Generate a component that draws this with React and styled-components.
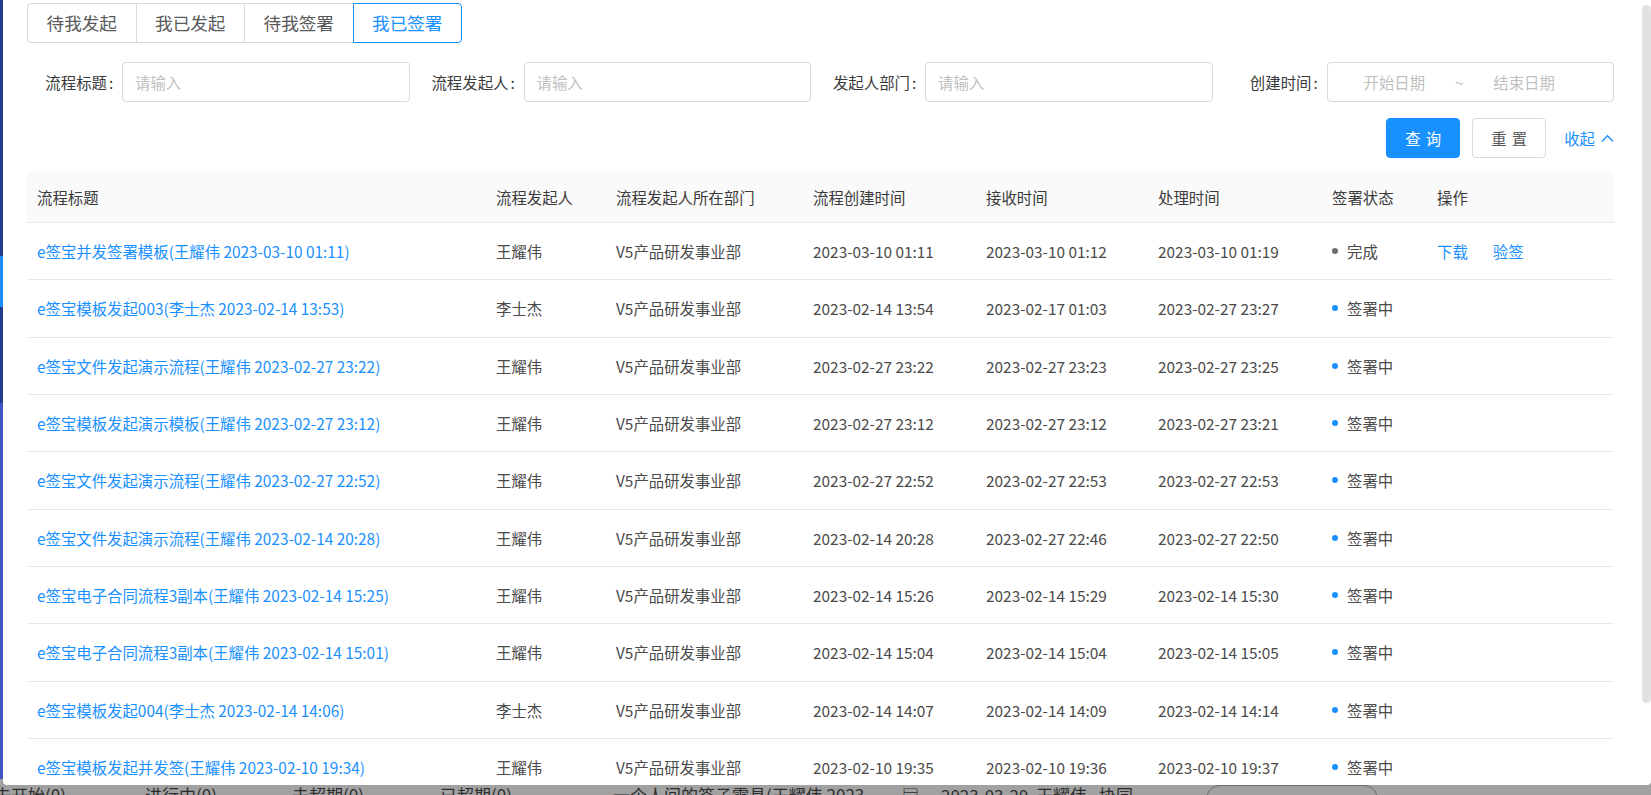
import React from 'react';
import styled, { createGlobalStyle } from 'styled-components';

const GlobalStyle = createGlobalStyle`
  html, body { margin: 0; padding: 0; width: 1651px; height: 795px; overflow: hidden; }
  body { font-family: "Noto Sans CJK SC", "Noto Sans", sans-serif; background: #a2a2a2; }
  *, *::before, *::after { box-sizing: border-box; }
  input { font-family: inherit; }
`;

const Screen = styled.div`
  position: relative;
  width: 1651px;
  height: 795px;
  overflow: hidden;
  display: flex;
  flex-direction: column;
  background: #a2a2a2;
`;

/* ---------- dimmed page behind the modal ---------- */
const Upper = styled.div`
  flex: 1;
  display: flex;
  min-height: 0;
`;

const Sidebar = styled.nav`
  width: 200px;
  flex: none;
  display: flex;
  flex-direction: column;
  background: #4453c3;
`;

const NavBlock = styled.div`
  flex: ${p => (p.$h ? 'none' : '1')};
  height: ${p => (p.$h ? `${p.$h}px` : 'auto')};
  background: ${p => p.$c};
`;

const PageArea = styled.div`
  flex: 1;
  background: #a4a4a4;
`;

const Strip = styled.div`
  height: 16px;
  flex: none;
  display: grid;
  grid-template-columns: 151px 147px 148px 173px 289px 39px 95px 63px 107px 172px 1fr;
  margin-left: -6px;
  padding-top: 6px;
  background: #a1a1a1;
  color: #2e2e2e;
  font-size: 17px;
  line-height: 20px;
  overflow: hidden;
  white-space: nowrap;
`;

const StripCell = styled.span`
  overflow: hidden;
`;

const StripBox = styled.span`
  display: block;
  height: 30px;
  border: 1px solid #6c6c6c;
  border-radius: 14px;
`;

/* ---------- modal ---------- */
const Modal = styled.section`
  position: absolute;
  left: 3px;
  top: 0;
  right: 0;
  height: 785px;
  background: #fff;
  border-radius: 0 0 4px 4px;
  overflow: hidden;
  display: flex;
  flex-direction: column;
  padding: 3px 37px 0 24px;
  font-size: 15.4px;
  color: #4a4a4a;
`;

const ScrollThumb = styled.div`
  position: absolute;
  right: 0;
  top: 5px;
  width: 9px;
  height: 698px;
  background: #e2e2e2;
  border-radius: 5px;
`;

const TabBar = styled.div`
  display: flex;
  flex: none;
`;

const Tab = styled.button`
  width: 109.5px;
  height: 40px;
  margin: 0 0 0 -1px;
  padding: 0;
  background: #fff;
  border: 1px solid ${p => (p.$active ? '#1890ff' : '#d9d9d9')};
  color: ${p => (p.$active ? '#1890ff' : '#595959')};
  font-family: inherit;
  font-size: 17.6px;
  line-height: 38px;
  position: relative;
  z-index: ${p => (p.$active ? 1 : 0)};
  cursor: pointer;
  &:first-child { margin-left: 0; border-radius: 4px 0 0 4px; }
  &:last-child { border-radius: 0 4px 4px 0; }
`;

const FilterGrid = styled.div`
  display: grid;
  grid-template-columns: repeat(4, 401.5px);
  margin: 19px 0 0 -19px;
  flex: none;
`;

const Field = styled.div`
  display: flex;
  align-items: center;
  height: 40px;
  min-width: 0;
`;

const Label = styled.label`
  width: 114px;
  flex: none;
  text-align: right;
  padding-right: 8.8px;
  color: #3a3a3a;
  white-space: nowrap;
  &::after { content: ':'; margin-left: 2px; }
`;

const TextInput = styled.input`
  flex: 1;
  width: 0;
  min-width: 0;
  height: 40px;
  border: 1px solid #d9d9d9;
  border-radius: 4px;
  padding: 0 12px;
  font-size: 15.4px;
  color: #4a4a4a;
  outline: none;
  &::placeholder { color: #bfbfbf; }
`;

const Range = styled.div`
  flex: 1;
  width: 0;
  min-width: 0;
  height: 40px;
  border: 1px solid #d9d9d9;
  border-radius: 4px;
  display: flex;
  align-items: center;
  padding: 0 34px 0 12px;
`;

const RangeInput = styled.input`
  flex: 1;
  width: 0;
  min-width: 0;
  padding: 0;
  border: none;
  outline: none;
  text-align: center;
  font-size: 15.4px;
  background: transparent;
  &::placeholder { color: #bfbfbf; }
`;

const RangeSep = styled.span`
  width: 20px;
  flex: none;
  text-align: center;
  color: #bfbfbf;
`;

const ActionRow = styled.div`
  display: flex;
  justify-content: flex-end;
  align-items: center;
  gap: 12px;
  margin-top: 16px;
  flex: none;
`;

const Button = styled.button`
  width: 74px;
  height: 40px;
  border-radius: 4px;
  border: 1px solid ${p => (p.$primary ? '#1890ff' : '#d9d9d9')};
  background: ${p => (p.$primary ? '#1890ff' : '#fff')};
  color: ${p => (p.$primary ? '#fff' : '#595959')};
  font-family: inherit;
  font-size: 15.4px;
  letter-spacing: 0.34em;
  text-indent: 0.34em;
  padding: 0;
  cursor: pointer;
`;

const CollapseLink = styled.a`
  margin-left: 6px;
  color: #1890ff;
  display: inline-flex;
  align-items: center;
  gap: 6px;
  cursor: pointer;
`;

const Table = styled.div`
  margin-top: 13px;
  flex: none;
`;

const COLS = '459px 120px 197px 173px 172px 174px 105px 1fr';

const HeadRow = styled.div`
  display: grid;
  grid-template-columns: ${COLS};
  height: 52px;
  background: #fafafa;
  border-bottom: 1px solid #e8e8e8;
  border-radius: 4px 4px 0 0;
  color: #3a3a3a;
`;

const Row = styled.div`
  display: grid;
  grid-template-columns: ${COLS};
  height: 57.33px;
  border-bottom: 1px solid #e8e8e8;
`;

const Cell = styled.div`
  display: flex;
  align-items: center;
  padding: 0 10px;
  white-space: nowrap;
  overflow: hidden;
  gap: ${p => p.$gap || 0}px;
`;

const Link = styled.a`
  color: #1890ff;
  cursor: pointer;
`;

const Dot = styled.span`
  width: 6px;
  height: 6px;
  border-radius: 50%;
  background: ${p => (p.$done ? '#6e6e6e' : '#1890ff')};
  margin-right: 9px;
  flex: none;
`;

const ChevronUp = () => (
  <svg width="13" height="9" viewBox="0 0 13 9" fill="none">
    <path d="M1 7.5 L6.5 1.8 L12 7.5" stroke="#1890ff" strokeWidth="1.3" />
  </svg>
);

const DEPT = 'V5产品研发事业部';
const rows = [
  ['e签宝并发签署模板(王耀伟 2023-03-10 01:11)', '王耀伟', '2023-03-10 01:11', '2023-03-10 01:12', '2023-03-10 01:19', true],
  ['e签宝模板发起003(李士杰 2023-02-14 13:53)', '李士杰', '2023-02-14 13:54', '2023-02-17 01:03', '2023-02-27 23:27'],
  ['e签宝文件发起演示流程(王耀伟 2023-02-27 23:22)', '王耀伟', '2023-02-27 23:22', '2023-02-27 23:23', '2023-02-27 23:25'],
  ['e签宝模板发起演示模板(王耀伟 2023-02-27 23:12)', '王耀伟', '2023-02-27 23:12', '2023-02-27 23:12', '2023-02-27 23:21'],
  ['e签宝文件发起演示流程(王耀伟 2023-02-27 22:52)', '王耀伟', '2023-02-27 22:52', '2023-02-27 22:53', '2023-02-27 22:53'],
  ['e签宝文件发起演示流程(王耀伟 2023-02-14 20:28)', '王耀伟', '2023-02-14 20:28', '2023-02-27 22:46', '2023-02-27 22:50'],
  ['e签宝电子合同流程3副本(王耀伟 2023-02-14 15:25)', '王耀伟', '2023-02-14 15:26', '2023-02-14 15:29', '2023-02-14 15:30'],
  ['e签宝电子合同流程3副本(王耀伟 2023-02-14 15:01)', '王耀伟', '2023-02-14 15:04', '2023-02-14 15:04', '2023-02-14 15:05'],
  ['e签宝模板发起004(李士杰 2023-02-14 14:06)', '李士杰', '2023-02-14 14:07', '2023-02-14 14:09', '2023-02-14 14:14'],
  ['e签宝模板发起并发签(王耀伟 2023-02-10 19:34)', '王耀伟', '2023-02-10 19:35', '2023-02-10 19:36', '2023-02-10 19:37'],
];

const headers = ['流程标题', '流程发起人', '流程发起人所在部门', '流程创建时间', '接收时间', '处理时间', '签署状态', '操作'];
const tabs = ['待我发起', '我已发起', '待我签署', '我已签署'];

export default function App() {
  return (
    <>
      <GlobalStyle />
      <Screen>
        <Upper>
          <Sidebar>
            <NavBlock $h={256} $c="#213c8e" />
            <NavBlock $h={51} $c="#1a8bf8" />
            <NavBlock $h={96} $c="#213c8e" />
            <NavBlock $c="#4453c3" />
          </Sidebar>
          <PageArea />
        </Upper>
        <Strip>
          <StripCell>未开始(0)</StripCell>
          <StripCell>进行中(0)</StripCell>
          <StripCell>未超期(0)</StripCell>
          <StripCell>已超期(0)</StripCell>
          <StripCell>一个人间的签子需具(王耀伟 2023...</StripCell>
          <StripCell>▤</StripCell>
          <StripCell>2023-03-20</StripCell>
          <StripCell>王耀伟</StripCell>
          <StripCell>协同</StripCell>
          <StripBox />
          <StripCell />
        </Strip>

        <Modal>
          <TabBar>
            {tabs.map((t, i) => (
              <Tab key={t} $active={i === 3}>{t}</Tab>
            ))}
          </TabBar>

          <FilterGrid>
            <Field>
              <Label>流程标题</Label>
              <TextInput placeholder="请输入" />
            </Field>
            <Field>
              <Label>流程发起人</Label>
              <TextInput placeholder="请输入" />
            </Field>
            <Field>
              <Label>发起人部门</Label>
              <TextInput placeholder="请输入" />
            </Field>
            <Field>
              <Label>创建时间</Label>
              <Range>
                <RangeInput placeholder="开始日期" />
                <RangeSep>~</RangeSep>
                <RangeInput placeholder="结束日期" />
              </Range>
            </Field>
          </FilterGrid>

          <ActionRow>
            <Button $primary>查询</Button>
            <Button>重置</Button>
            <CollapseLink>
              收起
              <ChevronUp />
            </CollapseLink>
          </ActionRow>

          <Table>
            <HeadRow>
              {headers.map(h => (
                <Cell key={h}>{h}</Cell>
              ))}
            </HeadRow>
            {rows.map((r, i) => (
              <Row key={i}>
                <Cell><Link>{r[0]}</Link></Cell>
                <Cell>{r[1]}</Cell>
                <Cell>{DEPT}</Cell>
                <Cell>{r[2]}</Cell>
                <Cell>{r[3]}</Cell>
                <Cell>{r[4]}</Cell>
                <Cell>
                  <Dot $done={r[5]} />
                  {r[5] ? '完成' : '签署中'}
                </Cell>
                <Cell $gap={25}>
                  {r[5] && (
                    <>
                      <Link>下载</Link>
                      <Link>验签</Link>
                    </>
                  )}
                </Cell>
              </Row>
            ))}
          </Table>
          <ScrollThumb />
        </Modal>
      </Screen>
    </>
  );
}
